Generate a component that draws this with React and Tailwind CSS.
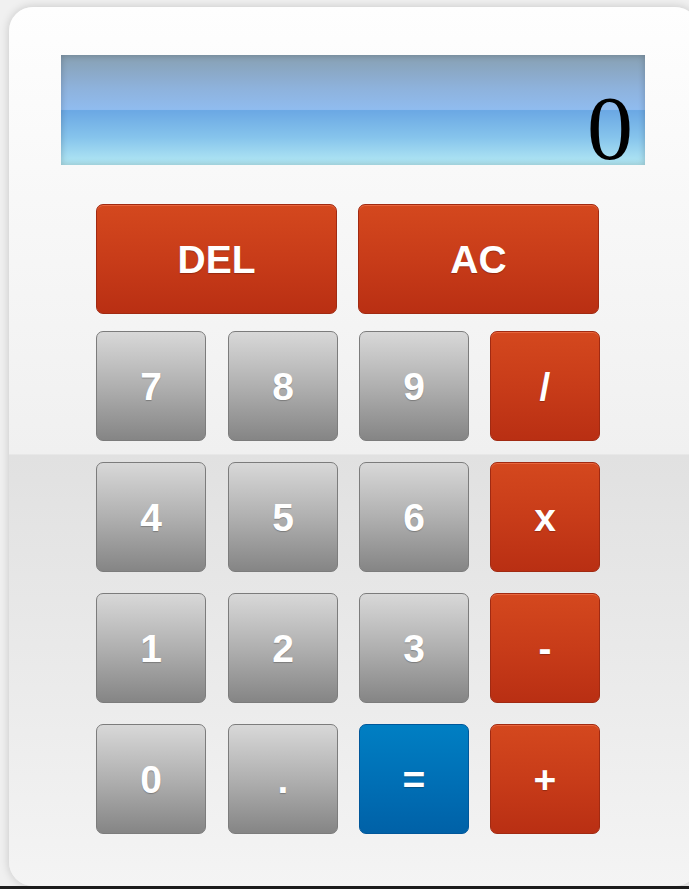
import React from "react";

const gray =
  "bg-[linear-gradient(to_bottom,#d8d8d8_0%,#b0b0b0_50%,#858585_100%)] border-[#7c7c7c]";
const red =
  "bg-[linear-gradient(to_bottom,#d4481e_0%,#c83c19_50%,#b92f13_100%)] border-[#a12a12] shadow-[inset_0_1px_0_rgba(255,140,100,0.45)]";
const blue =
  "bg-[linear-gradient(to_bottom,#007fc3_0%,#0070b6_50%,#0061a7_100%)] border-[#00579a]";

function Key({ label, tone, wide, extra = "" }) {
  const cls = tone === "red" ? red : tone === "blue" ? blue : gray;
  return (
    <button
      className={`${cls} ${wide ? "w-[241px]" : "w-[110px]"} ${extra} h-[110px] shrink-0 rounded-[7px] border flex items-center justify-center text-white font-bold text-[39px] leading-none [text-shadow:0_1px_1px_rgba(0,0,0,0.25)]`}
      style={{ fontFamily: '"Liberation Sans", Arial, sans-serif' }}
    >
      {label}
    </button>
  );
}

export default function App() {
  const rows = [
    [["7"], ["8"], ["9"], ["/", "red"]],
    [["4"], ["5"], ["6"], ["x", "red"]],
    [["1"], ["2"], ["3"], ["-", "red"]],
    [["0"], ["."], ["=", "blue"], ["+", "red"]],
  ];
  return (
    <div className="h-[889px] w-[689px] overflow-hidden bg-[#1e1e1e]">
      <div className="h-[886px] bg-[#f0f0f0] pt-[7px] pl-[9px]">
        <div className="h-[879px] w-[690px] rounded-[24px] bg-[linear-gradient(to_bottom,#fefefe_0%,#f0f0f0_50.8%,#e1e1e1_51%,#e8e8e8_70%,#f4f4f4_100%)] shadow-[0_0_10px_rgba(0,0,0,0.18)] pt-[48px]">
          <div className="ml-[52px] w-[584px] h-[110px] bg-[linear-gradient(to_bottom,#88a0b2_0%,#8eb2dc_30%,#90bcef_49.5%,#6ba8e4_50.5%,#86c4ec_75%,#b4e9f4_100%)] shadow-[inset_0_0_7px_rgba(0,0,0,0.22)] flex items-end justify-end pr-[12px] pb-[2px]">
            <span
              className="text-black text-[92px] leading-[70px]"
              style={{ fontFamily: '"Liberation Serif", "Times New Roman", serif' }}
            >
              0
            </span>
          </div>
          <div className="ml-[87px] mt-[39px] flex flex-col">
            <div className="flex gap-[21px]">
              <Key label="DEL" tone="red" wide />
              <Key label="AC" tone="red" wide />
            </div>
            <div className="mt-[17px] flex flex-col gap-[21px]">
              {rows.map((r, i) => (
                <div key={i} className="flex gap-[21px]">
                  {r.map(([l, t], j) => (
                    <Key key={l} label={l} tone={t} extra={j === 1 ? "ml-px" : ""} />
                  ))}
                </div>
              ))}
            </div>
          </div>
        </div>
      </div>
    </div>
  );
}
